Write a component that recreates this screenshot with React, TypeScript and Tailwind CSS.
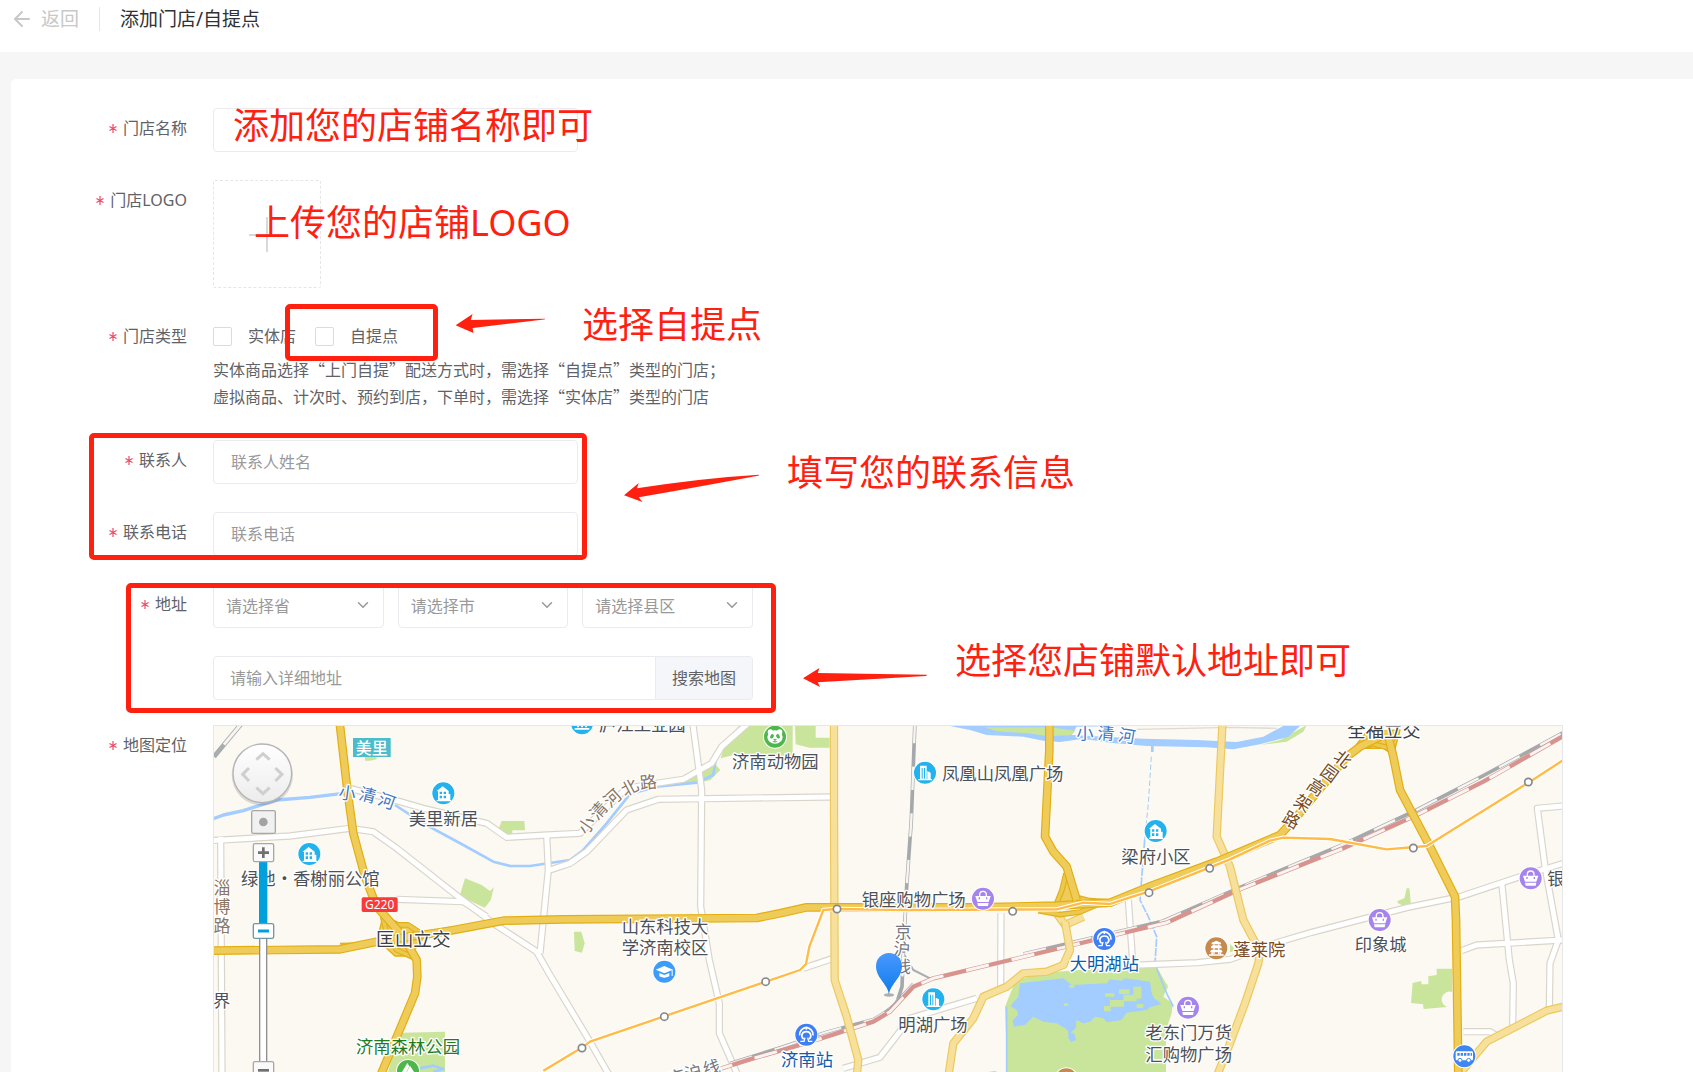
import type { ReactNode } from 'react';
import { ArrowLeft, ChevronDown } from 'lucide-react';

const CJK = '"Noto Sans CJK SC", sans-serif';

function Field({ label, htmlFor, children }: { label: string; htmlFor?: string; children: ReactNode }) {
  return (
    <div className="flex items-start">
      <label htmlFor={htmlFor} className="w-[176px] mr-[26px] h-10 leading-10 shrink-0 flex justify-end gap-[6px] text-[#606266]">
        <svg className="w-2 h-10 text-[#ee4a63]" viewBox="0 0 8 40" fill="none" stroke="currentColor" strokeWidth="1.2">
          <path d="M4 16v9M0.5 18.5l7 4M7.5 18.5l-7 4" />
        </svg>
        {label}
      </label>
      <div className="grow min-w-0">{children}</div>
    </div>
  );
}

function TextBox({ id, placeholder }: { id: string; placeholder?: string }) {
  return (
    <input
      id={id}
      type="text"
      placeholder={placeholder}
      className="block w-[365px] h-11 px-[17px] border border-[#ebebef] rounded-[4px] bg-white outline-none placeholder:text-[#999]"
    />
  );
}

function Region({ label }: { label: string }) {
  return (
    <div className="relative">
      <select aria-label={label} className="block w-full h-11 pl-3 pr-9 appearance-none border border-[#ebebef] rounded-[4px] bg-white text-[#999] outline-none">
        <option>{label}</option>
      </select>
      <ChevronDown className="absolute right-3 top-3 w-[18px] h-[18px] text-[#999] pointer-events-none" strokeWidth={2} />
    </div>
  );
}

function StoreType({ label }: { label: string }) {
  return (
    <label className="flex items-center gap-4 text-[#606266]">
      <input type="checkbox" className="appearance-none w-[19px] h-[19px] border border-[#d9dbe0] rounded-[2px] bg-white" />
      {label}
    </label>
  );
}

// ---- map ----

const WHITE_ROADS = [
  'M0 362L240 348L420 325L490 335L560 385L745 530L850 610L980 695L1020 765L1140 965L1200 1070',
  'M32 350L36 1070',
  'M420 205L570 245L640 265L830 310L890 352L1010 345L1110 340L1170 280L1250 205L1340 190L1420 178L1505 130L1535 80L1620 5',
  'M1010 345L1015 450L1000 600L990 700',
  'M1020 450L1080 430L1130 395L1250 270L1345 238L1480 236L1860 231',
  'M1447 0L1475 210L1472 560L1498 720L1528 850L1528 940L1585 1070',
  'M560 538L760 545L830 590',
  'M1780 745L1870 715',
  'M2373 580L2372 800',
  'M1900 1045L2010 1012L2050 960L2100 895L2300 835',
  'M2755 540L2768 725',
  'M2790 735L2960 728L3060 718L3210 665L3305 637L3590 563L3750 530L3930 470L4060 430',
  'M4060 258L3982 265L4005 440L4045 660L4020 730L4018 870',
  'M3875 485L3898 720L3910 790L3908 915',
  'M3755 692L3800 675L4060 660',
  'M3760 935L3840 935L3865 950',
];

const LIGHT_ROADS = [
  'M1872 0L1872 260L1874 780L1910 890L1945 1020L1940 1070',
  'M2540 580L2565 615L2620 590',
  'M2565 605L2580 690L2560 735L2510 755L2440 760L2390 800L2320 830L2290 895L2230 970L2215 1070',
  'M3038 0L3020 350L3060 440L3100 600L3150 695L3145 730L3105 850L3060 970L3020 1070',
  'M4060 860L4010 872L3830 965L3750 1060',
];

const MAIN_ROADS = [
  'M388 0L412 210L430 340L465 470L500 560L580 650L620 720L622 770L615 820L510 1070',
  'M0 692L200 690L390 688L500 665L720 632L880 602L1060 598L1640 594L1710 580L1790 562L1900 562L2300 562L2540 557L2700 548L2830 495L3020 425L3210 345L3260 290L3410 110L3450 80L3520 45',
  'M2518 0L2518 90L2505 350L2530 395L2570 440L2600 540',
  'M3530 30L3550 110L3570 210L3660 380L3735 530L3738 600L3745 1070',
];

const RAMPS = [
  'M518 590L530 640L560 690L610 712',
  'M530 600L560 615L595 615L640 645',
  'M390 677L450 675L600 652L720 628',
  'M2568 460L2556 510L2540 550',
  'M2570 450L2598 532L2640 542L2700 546',
  'M2485 572L2550 584L2610 576L2660 555',
  'M3440 84L3490 72L3530 82L3560 40',
];

const RED_RAIL = 'M1500 1056L1620 1018L1770 975L1850 950L1990 905L2040 875L2110 800L2170 775L2870 608L3090 508L3400 385L3620 285L3820 185L4060 48';
const GRAY_RAIL = 'M1560 1030L1720 980L1850 936L1990 898L2040 868L2110 792';
const GRAY_RAIL_EAST = 'M2440 702L2860 603L3090 502L3400 373L3620 270L3820 167L4060 38';
const NORTH_RAIL = 'M2115 0L2104 300L2090 500L2080 700L2076 800L2060 850L2010 890';
const METRO = 'M1000 1052L1120 980L1140 965L1770 750L1788 732L1798 680L1840 570L1880 567L2100 570L2540 568L2620 548L2700 552L2760 532L2816 515L3000 442L3060 418L3180 362L3220 353L3360 357L3530 388L3650 378L3960 185L4060 120';
const STATIONS = [[1116, 984], [1363, 890], [1667, 785], [1881, 567], [2408, 574], [2817, 518], [2999, 445], [3610, 384], [3955, 186]];

function Road({ d, edge, fill, width }: { d: string; edge: string; fill: string; width: number }) {
  return (
    <>
      <path d={d} stroke={edge} strokeWidth={width} />
      <path d={d} stroke={fill} strokeWidth={width - 7} />
    </>
  );
}

function Rail({ d, color, width }: { d: string; color: string; width: number }) {
  return (
    <>
      <path d={d} stroke={color} strokeWidth={width} />
      <path d={d} stroke="#f8f4f1" strokeWidth={width - 4} strokeDasharray="70 70" />
    </>
  );
}

const GLYPHS: Record<string, ReactNode> = {
  house: (
    <g fill="#fff">
      <path d="M-20 -7L-2 -21L16 -7V22H-16V-6Z" />
      <path d="M14 2h7v20h-7zM-20 20h43v4h-43z" />
      <path d="M-11 -5h7v7h-7zM1 -5h7v7h-7zM-11 7h7v8h-7zM1 7h7v8h-7z" fill="#22b3ee" />
    </g>
  ),
  tower: (
    <g fill="#fff">
      <path d="M-15 -21H5V21H-15zM7 -5L17 0V21H7zM-20 19H21v4H-20z" />
      <path d="M-10 -14h3v32h-3zM-3 -14h3v32h-3z" fill="#22b3ee" />
    </g>
  ),
  bag: (
    <g>
      <path d="M-10 -6V-12a10 10 0 0 1 20 0V-6" fill="none" stroke="#fff" strokeWidth="4" />
      <path d="M-23 -8H23L17 10H-17z" fill="#fff" />
      <path d="M-17 13H17L15 22H-15z" fill="#fff" />
      <path d="M-11 -4v6M11 -4v6" stroke="#a584ee" strokeWidth="4" />
    </g>
  ),
  train: (
    <g fill="none" stroke="#fff" strokeWidth="5">
      <path d="M-20 2C-22 -12 -10 -20 0 -22C10 -20 22 -12 20 2" />
      <path d="M-8 13C-18 6 -14 -9 0 -9S18 6 8 13" />
      <path d="M-18 20H-7L-4 9M18 20H7L4 9" strokeWidth="4" />
      <path d="M0 -22v7" />
    </g>
  ),
  school: (
    <g fill="#fff">
      <path d="M-26 -6L0 -17L26 -6L0 5z" />
      <path d="M-15 4L0 10L15 4V14Q0 22 -15 14z" />
      <path d="M22 -6h3v19h-3z" />
    </g>
  ),
  pagoda: (
    <g fill="#fff">
      <path d="M0 -23L14 -17V-12H-14V-17zM-16 -5L-12 -9H12L16 -5V0H-16zM-18 8L-14 4H14L18 8V12H-18zM-22 18H22V22H-22z" />
      <path d="M-9 -12h4v30h-4zM5 -12h4v30h-4zM-15 12h5v7h-5zM10 12h5v7h-5z" />
    </g>
  ),
  bus: (
    <g>
      <rect x="-26" y="-15" width="52" height="27" rx="4" fill="#fff" />
      <path d="M-21 -10h7v8h-7zM-11 -10h7v8h-7zM-1 -10h7v8h-7zM9 -10h7v8h-7zM19 -10h4v8h-4z" fill="#3f86f0" />
      <circle cx="-13" cy="12" r="6" fill="#fff" stroke="#3f86f0" strokeWidth="3" />
      <circle cx="13" cy="12" r="6" fill="#fff" stroke="#3f86f0" strokeWidth="3" />
    </g>
  ),
  panda: (
    <g>
      <circle cx="-14" cy="-14" r="8" fill="#fff" />
      <circle cx="14" cy="-14" r="8" fill="#fff" />
      <ellipse cx="0" cy="1" rx="23" ry="20" fill="#fff" />
      <ellipse cx="-9" cy="-1" rx="5" ry="7" fill="#4eb64b" transform="rotate(35 -9 -1)" />
      <ellipse cx="9" cy="-1" rx="5" ry="7" fill="#4eb64b" transform="rotate(-35 9 -1)" />
      <path d="M-4 8h8l-4 4zM-7 14Q0 19 7 14" fill="#4eb64b" stroke="#4eb64b" strokeWidth="2" />
    </g>
  ),
  tree: <path d="M-2 -24L-22 10H-8L4 -14zM6 -16L-8 12H24z" fill="#fff" />,
  museum: (
    <g fill="#fff">
      <path d="M-22 14H22v5H-22zM-15 -8h6v20h-6zM-3 -8h6v20h-6zM9 -8h6v20h-6z" />
    </g>
  ),
};

const MARKERS: [string, number, number, string][] = [
  ['house', 700, 220, '#22b3ee'],
  ['house', 298, 402, '#22b3ee'],
  ['house', 2837, 333, '#22b3ee'],
  ['museum', 1116, 10, '#22b3ee'],
  ['tower', 2145, 158, '#22b3ee'],
  ['tower', 2170, 838, '#22b3ee'],
  ['bag', 2319, 536, '#a584ee'],
  ['bag', 2934, 863, '#a584ee'],
  ['bag', 3509, 600, '#a584ee'],
  ['bag', 3962, 475, '#a584ee'],
  ['school', 1363, 755, '#3d9bfb'],
  ['panda', 1695, 50, '#4eb64b'],
  ['tree', 594, 1053, '#4eb64b'],
  ['train', 1789, 944, '#3f7ff3'],
  ['train', 2683, 657, '#3f7ff3'],
  ['pagoda', 3019, 685, '#c48a4f'],
  ['pagoda', 2569, 1078, '#c48a4f'],
  ['bus', 3763, 1009, '#3f86f0'],
];

const PLACES: [string, number, number, string][] = [
  ['美里新居', 700, 314, '#4d5157'],
  ['绿地·香榭丽公馆', 301, 496, '#4d5157'],
  ['济南森林公园', 594, 998, '#237a1f'],
  ['庐江工业园', 1297, 34, '#4d5157'],
  ['济南动物园', 1696, 144, '#4d5157'],
  ['山东科技大', 1365, 638, '#4d5157'],
  ['学济南校区', 1365, 703, '#4d5157'],
  ['济南站', 1791, 1038, '#0d5cae'],
  ['凤凰山凤凰广场', 2378, 180, '#4d5157'],
  ['银座购物广场', 2111, 557, '#4d5157'],
  ['梁府小区', 2838, 428, '#4d5157'],
  ['大明湖站', 2683, 751, '#0d5cae'],
  ['明湖广场', 2169, 933, '#4d5157'],
  ['老东门万货', 2936, 958, '#4d5157'],
  ['汇购物广场', 2936, 1023, '#4d5157'],
  ['蓬莱院', 3148, 707, '#7b4a22'],
  ['印象城', 3512, 694, '#4d5157'],
  ['银座', 4064, 496, '#4d5157'],
  ['界', 35, 860, '#4d5157'],
];

// single characters laid along a road or a river: text, x, y, angle, colour
const CURVED: [string, number, number, number, string][] = [
  ['小', 412, 220, 8, '#3f78c0'],
  ['清', 473, 226, 14, '#3f78c0'],
  ['河', 530, 244, 20, '#3f78c0'],
  ['小', 1130, 316, -55, '#8a7663'],
  ['清', 1166, 272, -48, '#8a7663'],
  ['河', 1208, 234, -42, '#8a7663'],
  ['北', 1259, 203, -28, '#8a7663'],
  ['路', 1315, 187, -6, '#8a7663'],
  ['小', 2625, 38, 0, '#3f78c0'],
  ['清', 2688, 40, 3, '#3f78c0'],
  ['河', 2751, 48, 10, '#3f78c0'],
  ['北', 3398, 118, 38, '#754a1b'],
  ['园', 3358, 160, 36, '#754a1b'],
  ['高', 3318, 202, 34, '#754a1b'],
  ['架', 3279, 250, 32, '#754a1b'],
  ['路', 3244, 300, 30, '#754a1b'],
  ['淄', 36, 505, 0, '#8a7663'],
  ['博', 36, 562, 0, '#8a7663'],
  ['路', 36, 619, 0, '#8a7663'],
  ['京', 2080, 637, 0, '#74787e'],
  ['沪', 2076, 688, 4, '#74787e'],
  ['线', 2078, 740, 4, '#74787e'],
  ['京', 1400, 1072, -14, '#74787e'],
  ['沪', 1450, 1058, -14, '#74787e'],
  ['线', 1505, 1043, -14, '#74787e'],
];

function StoreMap() {
  return (
    <svg viewBox="12 18 4044 1038" preserveAspectRatio="xMinYMin slice" className="block w-full h-full" role="img" aria-label="地图定位" style={{ fontFamily: CJK }}>
      <defs>
        <linearGradient id="knob" x1="0" y1="0" x2="0" y2="1">
          <stop offset="0" stopColor="#fff" />
          <stop offset="1" stopColor="#ececec" />
        </linearGradient>
        <linearGradient id="pin" x1="0" y1="0" x2="0" y2="1">
          <stop offset="0" stopColor="#4a98ff" />
          <stop offset="1" stopColor="#0d7bea" />
        </linearGradient>
      </defs>
      <rect x="0" y="0" width="4100" height="1100" fill="#fcf9f2" />

      {/* parks */}
      <g fill="#c9e59b">
        <path d="M465 110h35v8l-20 4h-15zM875 303h68l2 28h-38v12l-35 -5l-6 -12zM765 475l50 20l25 18l12 -12l-10 40l-18 22l-75 -35z" />
        <path d="M580 938L705 935V1070H530L555 980z" />
        <path d="M1092 635h22l10 35l-8 28l-22 -5z" />
        <path d="M1605 18H1748V110L1650 120L1570 105L1532 115L1540 88zM1755 18h62v35h42v30h-60l-42 -10zM1470 150l45 -18l16 18l-30 30l-50 12l-65 0z" />
        <path d="M2415 785L2480 760L2640 748L2840 740L2868 790a12 12 0 0 1 0 20L2860 830L2888 850L2885 880L2868 930V1070H2392L2385 860z" />
        <path d="M3590 505h8l5 50l-20 4l-20 -10v-6l20 -8zM3680 746h46v70a18 18 0 0 0 -15 45l-70 6l-2 -14l-36 -4l5 -60l25 -6l2 10h20v-24l25 -4z" />
        <path d="M2335 1056l20 -4l10 6zM3060 672l20 20l-20 5zM3150 75l60 -15l80 -45l-10 20l-50 30z" />
      </g>

      {/* water */}
      <g fill="#a3ccff">
        <path d="M2220 18L3000 14L2600 20L2585 45L2800 56L2960 60L3080 66L3160 50L3220 18L3270 18L3235 50L3150 73L3070 88L2990 82L2810 78L2700 68L2620 56L2550 66L2500 62L2440 50L2330 45L2280 30z" />
        <path d="M2430 790L2560 775L2585 795L2690 790L2700 778L2735 782L2745 775L2820 785L2825 820L2832 835L2855 852L2820 862L2810 870L2750 878L2735 900L2690 907L2680 895L2655 890L2640 905L2620 910L2600 900L2597 925L2580 940L2565 925L2540 910L2500 905L2470 890L2445 915L2412 920L2408 900L2425 885L2420 870L2402 858L2425 830z" />
        <path d="M2575 935l18 6l5 20l-15 5l-8 -12z" />
      </g>
      <g fill="#c9e59b">
        <path d="M2322 22h200l75 10l-15 14l-70 2l-60 -8l-90 -6zM2578 795h15v8h-15zM2685 820h28v10h-28zM2727 808h32v14h-32zM2770 800h24v36h-14v8h-38v16h-40v14h-20v-16h18v-18h40v-16h30zM2780 852h20v12h-20zM2562 850h12v8h-12z" />
      </g>
      <g fill="none" stroke="#a3ccff" strokeLinejoin="round">
        <path d="M0 300L40 285L100 272L200 240L300 232L400 220" strokeWidth="10" />
        <path d="M555 255L640 310L760 375L850 425L900 438L960 438L1080 420L1120 390L1190 310L1260 222L1340 200L1460 188L1510 165L1520 100L1600 10" strokeWidth="8" />
        <path d="M2827 78V96" strokeWidth="8" />
        <path d="M2824 110L2815 250L2804 360" strokeWidth="3" strokeDasharray="16 8" />
        <path d="M2804 360L2790 540L2815 590L2840 650L2835 730" strokeWidth="5" strokeDasharray="24 4" />
        <path d="M2390 860V1070M2840 745L2870 820L2890 860" strokeWidth="5" />
        <path d="M630 1045l40 -8l30 10l-30 8" strokeWidth="8" />
      </g>

      {/* roads and rails */}
      <g fill="none" strokeLinejoin="round">
        {WHITE_ROADS.map((d) => <path key={d} d={d} stroke="#dad5ca" strokeWidth="22" />)}
        {WHITE_ROADS.map((d) => <path key={d} d={d} stroke="#fff" strokeWidth="15" />)}
        <path d="M2780 28L3060 22L3200 25" stroke="#dfdad0" strokeWidth="4" />
        <path d="M12 110L95 10" stroke="#a9adb0" strokeWidth="14" />
        <path d="M42 74L95 10" stroke="#f8f4f1" strokeWidth="9" />
        <path d="M2080 700L2110 750L2160 775" stroke="#a9adb0" strokeWidth="6" />
        <Rail d={NORTH_RAIL} color="#a5a9ac" width={11} />
        <Rail d={GRAY_RAIL} color="#a5a9ac" width={10} />
        <Rail d={GRAY_RAIL_EAST} color="#a5a9ac" width={11} />
        <Rail d={RED_RAIL} color="#d9938e" width={13} />
        {LIGHT_ROADS.map((d) => <Road key={d} d={d} edge="#ecc95a" fill="#f6e09c" width={25} />)}
        <path d="M520 585L565 608H592L645 640L720 622L640 655L600 708H555L525 680L500 665Z" fill="#efcb5a" stroke="#e2ae10" strokeWidth="4" />
        <path d="M2565 465L2598 540L2545 550Z" fill="#efcb5a" />
        <path d="M3430 85L3470 35L3570 30L3550 105L3520 85Z" fill="#efcb5a" stroke="#e2ae10" strokeWidth="4" />
        {RAMPS.map((d) => <Road key={d} d={d} edge="#dfb01c" fill="#edc84e" width={17} />)}
        {MAIN_ROADS.map((d) => <Road key={d} d={d} edge="#e2ae10" fill="#efcb5a" width={26} />)}
        <path d={METRO} stroke="#fff" strokeWidth="13" />
        <path d={METRO} stroke="#ffbb45" strokeWidth="7" />
      </g>
      {STATIONS.map(([x, y]) => (
        <circle key={x} cx={x} cy={y} r="11" fill="#fff" stroke="#85888c" strokeWidth="5" />
      ))}

      {MARKERS.map(([kind, x, y, color]) => (
        <g key={`${x}-${y}`} transform={`translate(${x} ${y})`}>
          <circle r="36" fill="#fff" />
          <circle r="33" fill={color} />
          {GLYPHS[kind]}
        </g>
      ))}

      {/* labels */}
      <g fontSize="52" textAnchor="middle" stroke="#fff" strokeWidth="8" strokeLinejoin="round" paintOrder="stroke">
        {PLACES.map(([name, x, y, color]) => (
          <text key={name} x={x} y={y} fill={color}>{name}</text>
        ))}
        <text x="610" y="678" fontSize="56" fill="#3c3f45">匡山立交</text>
        <text x="3522" y="50" fontSize="55" fill="#3c3f45">全福立交</text>
        {CURVED.map(([char, x, y, angle, color]) => (
          <text key={`${char}-${x}-${y}`} transform={`translate(${x} ${y}) rotate(${angle})`} y="18" fontSize="51" fill={color}>{char}</text>
        ))}
      </g>
      <rect x="429" y="54" width="113" height="57" fill="#4cbccb" />
      <text x="485" y="101" fontSize="48" fontWeight="500" textAnchor="middle" fill="#fff">美里</text>
      <rect x="455" y="532" width="108" height="44" rx="5" fill="#f93a3a" />
      <text x="509" y="567" fontSize="36" textAnchor="middle" fill="#fff" fontFamily="Noto Sans">G220</text>

      {/* store pin */}
      <ellipse cx="2037" cy="825" rx="15" ry="5" fill="#000" opacity="0.3" />
      <path d="M2037 825C2034 792 1998 775 1998 738a39 39 0 0 1 78 0C2076 775 2040 792 2037 825z" fill="url(#pin)" />

      {/* pan and zoom control */}
      <circle cx="157" cy="165" r="92" fill="#000" opacity="0.12" />
      <circle cx="157" cy="160" r="88" fill="url(#knob)" stroke="#b5b5b5" strokeWidth="4" />
      <path d="M139 119L159 101L179 119M139 203L159 221L179 203M117 144L98 163L117 183M196 144L216 163L196 183" fill="none" stroke="#cfcfcf" strokeWidth="9" />
      <rect x="125" y="272" width="71" height="68" rx="5" fill="#f1f1f1" stroke="#a8a8a8" strokeWidth="4" />
      <circle cx="160" cy="306" r="13" fill="#a3a3a3" />
      <rect x="149" y="640" width="21" height="400" fill="#fff" stroke="#8f8f8f" strokeWidth="4" />
      <rect x="147" y="420" width="25" height="200" fill="#00a0dc" />
      <rect x="130" y="371" width="61" height="54" rx="5" fill="#fafafa" stroke="#a8a8a8" strokeWidth="4" />
      <path d="M144 398H177M160 382V414" stroke="#707070" strokeWidth="8" />
      <rect x="130" y="611" width="61" height="44" rx="5" fill="#fff" stroke="#6f98a5" strokeWidth="4" />
      <path d="M144 633H177" stroke="#00a0dc" strokeWidth="9" />
      <rect x="130" y="1025" width="61" height="54" rx="5" fill="#fafafa" stroke="#a8a8a8" strokeWidth="4" />
      <path d="M144 1051H177" stroke="#707070" strokeWidth="8" />
    </svg>
  );
}

// ---- hand-drawn notes over the form ----

function Note({ className, children }: { className: string; children: ReactNode }) {
  return <p className={`absolute whitespace-nowrap text-4xl leading-10 text-[#ff2010] pointer-events-none ${className}`}>{children}</p>;
}

function Frame({ className }: { className: string }) {
  return <div className={`absolute border-[5px] border-[#ff2010] rounded-[5px] pointer-events-none ${className}`} />;
}

function Notes() {
  return (
    <div className="absolute left-0 top-0 pointer-events-none">
      <Note className="left-[222px] top-[27px]">添加您的店铺名称即可</Note>
      <Note className="left-[243px] top-[124px]">上传您的店铺LOGO</Note>
      <Note className="left-[571px] top-[226px]">选择自提点</Note>
      <Note className="left-[776px] top-[374px]">填写您的联系信息</Note>
      <Note className="left-[944px] top-[562px]">选择您店铺默认地址即可</Note>
      <Frame className="left-[274px] top-[225px] w-[153px] h-[57px]" />
      <Frame className="left-[78px] top-[354px] w-[498px] h-[127px]" />
      <Frame className="left-[115px] top-[504px] w-[650px] h-[130px]" />
      <svg className="absolute left-[444px] top-[235px]" width="92" height="20" viewBox="0 0 92 20" fill="#ff2010">
        <path d="M0.6 11.3L17.6 0L15.7 6L90 4.7Q91 5 89 5.6L17.6 14L18.5 19Z" />
      </svg>
      <svg className="absolute left-[612px] top-[395px]" width="138" height="29" viewBox="0 0 138 29" fill="#ff2010">
        <path d="M1 21.3L15.8 9L14 14.3Q80 4 136 0.7Q137 1 135 1.7Q80 12 15.8 23.3L19.4 28Z" />
      </svg>
      <svg className="absolute left-[791px] top-[589px]" width="126" height="20" viewBox="0 0 126 20" fill="#ff2010">
        <path d="M1 10.3L17.4 0L15.8 5L124.6 6.8Q125.5 7.3 124 7.9L15.8 14.3L18 19Z" />
      </svg>
    </div>
  );
}

export default function App() {
  return (
    <div
      lang="zh-CN"
      className="h-screen overflow-hidden flex flex-col bg-[#f6f6f6] text-base font-['Noto_Sans','Noto_Sans_CJK_SC',sans-serif]"
    >
      <header className="h-[52px] pb-[14px] pl-[10px] shrink-0 flex items-center bg-white">
        <a href="#" className="flex items-center gap-[7px] text-[19px] text-[#c8c8c8]">
          <ArrowLeft className="w-6 h-6" strokeWidth={2} />
          返回
        </a>
        <div className="w-px h-6 mx-5 bg-[#e6e6e6]" />
        <h1 className="text-[19px] text-[#303133]">添加门店/自提点</h1>
      </header>

      <main className="relative grow min-h-0 mt-[27px] ml-[11px] pt-[29px] flex flex-col bg-white rounded-tl-[5px]">
        <form className="flex flex-col gap-7">
          <Field label="门店名称" htmlFor="name">
            <TextBox id="name" />
          </Field>

          <Field label="门店LOGO" htmlFor="logo">
            <label htmlFor="logo" className="w-[108px] h-[108px] flex items-center justify-center border border-dashed border-[#e6e6ea] rounded-[2px]">
              <svg width="36" height="36" viewBox="0 0 36 36" stroke="#d9d9d9" strokeWidth="2">
                <path d="M0 19H36M18 1V36" />
              </svg>
              <input id="logo" type="file" aria-label="门店LOGO" className="sr-only" />
            </label>
          </Field>

          <Field label="门店类型">
            <div className="h-10 flex items-center gap-[19px]">
              <StoreType label="实体店" />
              <StoreType label="自提点" />
            </div>
            <div className="pb-[2px] leading-[27px] text-[#606266] font-['Noto_Sans_CJK_SC',sans-serif]">
              <p>实体商品选择“上门自提”配送方式时，需选择“自提点”类型的门店；</p>
              <p>虚拟商品、计次时、预约到店，下单时，需选择“实体店”类型的门店</p>
            </div>
          </Field>

          <Field label="联系人" htmlFor="contact">
            <TextBox id="contact" placeholder="联系人姓名" />
          </Field>

          <Field label="联系电话" htmlFor="phone">
            <TextBox id="phone" placeholder="联系电话" />
          </Field>

          <Field label="地址" htmlFor="address">
            <div className="w-[540px] grid grid-cols-3 gap-[14px]">
              <Region label="请选择省" />
              <Region label="请选择市" />
              <Region label="请选择县区" />
            </div>
            <div className="mt-7 w-[540px] h-11 flex border border-[#ebebef] rounded-[4px] overflow-hidden">
              <input id="address" type="text" placeholder="请输入详细地址" className="grow min-w-0 pl-4 outline-none placeholder:text-[#999]" />
              <button type="button" className="px-4 border-l border-[#ebebef] bg-[#f5f6fa] text-[#606266]">搜索地图</button>
            </div>
          </Field>
        </form>

        <div className="mt-[25px] mr-[130px]">
          <Field label="地图定位">
            <div className="h-[347px] border border-b-0 border-[#e6e7eb]">
              <StoreMap />
            </div>
          </Field>
        </div>

        <Notes />
      </main>
    </div>
  );
}
